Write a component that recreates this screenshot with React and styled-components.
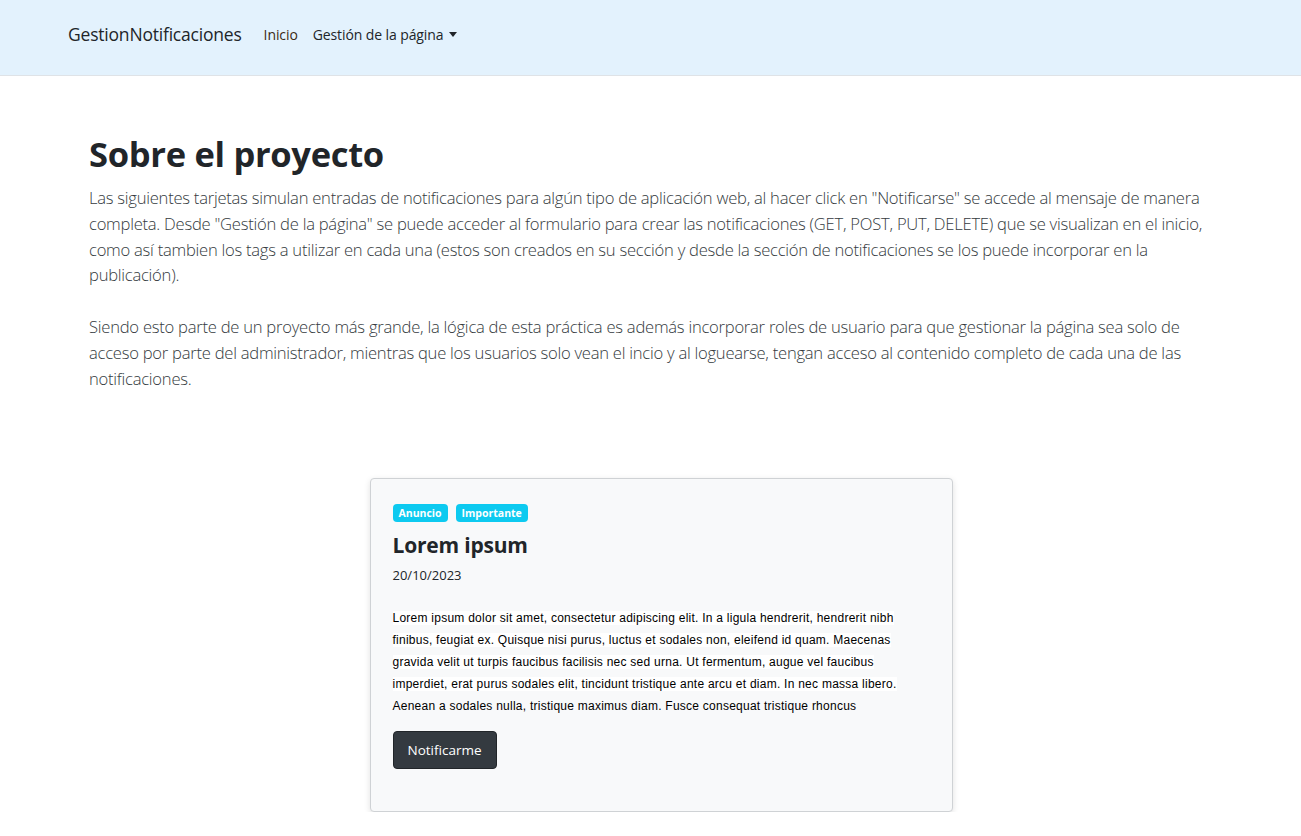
import styled, { createGlobalStyle } from "styled-components";

const GlobalStyle = createGlobalStyle`
	body {
		margin: 0;
		background: #fff;
		color: #212529;
		font-family: "Open Sans", "Noto Sans", sans-serif;
	}
	* {
		box-sizing: border-box;
	}
`;

const Navbar = styled.nav`
	height: 76px;
	background: #e3f2fd;
	border-bottom: 1px solid #dfe3e7;
	display: flex;
	align-items: center;
	padding: 0 0 7px 68px;
`;

const Brand = styled.a`
	font-size: 17.5px;
	color: #212529;
	margin-right: 22px;
	text-decoration: none;
	letter-spacing: -0.2px;
`;

const NavLink = styled.a`
	font-size: 14px;
	color: ${(p) => (p.active ? "#3b2a12" : "#212529")};
	margin-right: 15px;
	display: flex;
	align-items: center;
	text-decoration: none;
	letter-spacing: -0.1px;
`;

const Caret = styled.span`
	display: inline-block;
	margin-left: 6px;
	border-top: 5px solid #212529;
	border-left: 4px solid transparent;
	border-right: 4px solid transparent;
`;

const Main = styled.main`
	padding: 56px 86px 0 89px;
`;

const Title = styled.h1`
	margin: 0 0 9px;
	font-size: 34.5px;
	font-weight: 700;
	line-height: 44px;
	letter-spacing: -0.3px;
`;

const Lead = styled.p`
	margin: 0;
	font-size: 16.6px;
	font-weight: 300;
	line-height: 25.8px;
	color: #343a40;
	letter-spacing: -0.25px;
	& + & {
		margin-top: 25.8px;
	}
`;

const CardRow = styled.section`
	display: flex;
	justify-content: center;
	margin-top: 87px;
	padding-left: 18px;
`;

const Card = styled.article`
	width: 583px;
	height: 334px;
	background: #f8f9fa;
	border: 1px solid #cfd2d5;
	border-radius: 4px;
	box-shadow: 0 2px 6px rgba(0, 0, 0, 0.12);
	padding: 25px 22px;
`;

const Tags = styled.div`
	display: flex;
	gap: 8px;
`;

const Badge = styled.span`
	background: #0dcaf0;
	color: #fff;
	font-size: 10.5px;
	font-weight: 700;
	padding: 2px 6px;
	border-radius: 4px;
	line-height: 14px;
`;

const CardTitle = styled.h2`
	margin: 9px 0 0;
	font-size: 21px;
	font-weight: 700;
	line-height: 28px;
	letter-spacing: -0.2px;
`;

const CardDate = styled.p`
	margin: 7px 0 0;
	font-size: 13px;
	line-height: 18px;
`;

const CardText = styled.p`
	margin: 23px 0 0;
	font-family: "Liberation Sans", Arial, sans-serif;
	font-size: 12px;
	line-height: 22px;
	letter-spacing: 0.25px;
	color: #000;
	white-space: nowrap;
`;

const Highlight = styled.span`
	background: #fff;
`;

const Button = styled.button`
	margin-top: 14px;
	background: #343a40;
	color: #fff;
	border: 1px solid #212529;
	border-radius: 4px;
	font-family: inherit;
	font-size: 13.5px;
	height: 38px;
	padding: 0 14px;
`;

const App = () => {
	return (
		<>
			<GlobalStyle />
			<Navbar>
				<Brand>GestionNotificaciones</Brand>
				<NavLink active>Inicio</NavLink>
				<NavLink>
					Gestión de la página
					<Caret />
				</NavLink>
			</Navbar>
			<Main>
				<Title>Sobre el proyecto</Title>
				<Lead>
					Las siguientes tarjetas simulan entradas de notificaciones para algún tipo de aplicación web, al hacer click en "Notificarse" se accede al mensaje de manera completa. Desde "Gestión de la página" se puede acceder al formulario para crear las notificaciones (GET, POST, PUT, DELETE) que se visualizan en el inicio, como así tambien los tags a utilizar en cada una (estos son creados en su sección y desde la sección de notificaciones se los puede incorporar en la publicación).
				</Lead>
				<Lead>
					Siendo esto parte de un proyecto más grande, la lógica de esta práctica es además incorporar roles de usuario para que gestionar la página sea solo de acceso por parte del administrador, mientras que los usuarios solo vean el incio y al loguearse, tengan acceso al contenido completo de cada una de las notificaciones.
				</Lead>
				<CardRow>
					<Card>
						<Tags>
							<Badge>Anuncio</Badge>
							<Badge>Importante</Badge>
						</Tags>
						<CardTitle>Lorem ipsum</CardTitle>
						<CardDate>20/10/2023</CardDate>
						<CardText>
							<Highlight>
								Lorem ipsum dolor sit amet, consectetur adipiscing elit. In a ligula hendrerit, hendrerit nibh
								<br />
								finibus, feugiat ex. Quisque nisi purus, luctus et sodales non, eleifend id quam. Maecenas
								<br />
								gravida velit ut turpis faucibus facilisis nec sed urna. Ut fermentum, augue vel faucibus
								<br />
								imperdiet, erat purus sodales elit, tincidunt tristique ante arcu et diam. In nec massa libero.
							</Highlight>
							<br />
							Aenean a sodales nulla, tristique maximus diam. Fusce consequat tristique rhoncus
						</CardText>
						<Button>Notificarme</Button>
					</Card>
				</CardRow>
			</Main>
		</>
	);
};

export default App;
